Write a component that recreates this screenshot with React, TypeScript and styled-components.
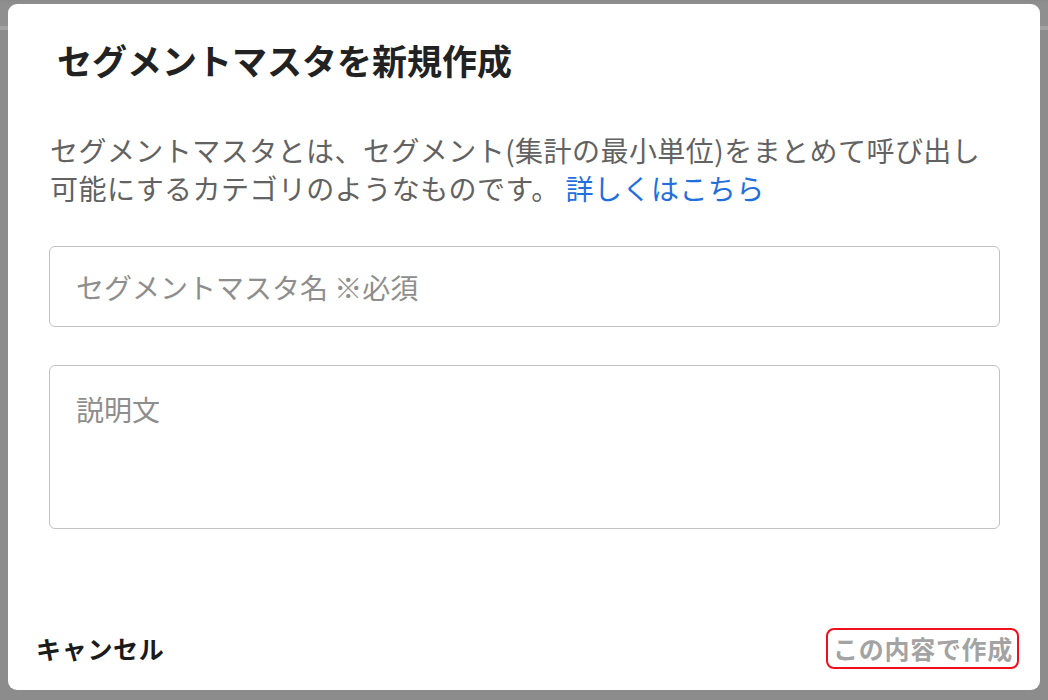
import React from "react";
import styled, { createGlobalStyle } from "styled-components";

const GlobalStyle = createGlobalStyle`
  html, body {
    margin: 0;
    padding: 0;
    overflow: hidden;
    background: #8a8a8a;
  }
  * {
    box-sizing: border-box;
  }
`;

const FONT = `"Noto Sans CJK JP", "Noto Sans", sans-serif`;

const Backdrop = styled.div`
  width: 1048px;
  height: 700px;
  padding: 4px 8px 10px 8px;
  background: linear-gradient(
    to bottom,
    #8a8a8a 0,
    #8f8f8f 4px,
    #8f8f8f 26px,
    #a2a2a2 26px,
    #a2a2a2 30px,
    #8c8c8c 30px
  );
  font-family: ${FONT};
`;

const Modal = styled.div`
  height: 100%;
  background: #fff;
  border-radius: 9px;
  display: flex;
  flex-direction: column;
`;

const Title = styled.h2`
  margin: 34px 0 0 0;
  padding: 0 40px 0 49px;
  font-size: 35px;
  line-height: 44px;
  font-weight: 700;
  color: #222;
`;

const Body = styled.div`
  padding: 49px 40px 0 42px;
  display: flex;
  flex-direction: column;
`;

const Description = styled.p`
  margin: 0;
  font-size: 28px;
  line-height: 38px;
  letter-spacing: 0.45px;
  color: #626262;
  white-space: nowrap;
`;

const Link = styled.a`
  color: #1f6fde;
  text-decoration: none;
  margin-left: 6px;
  cursor: pointer;
`;

const fieldBase = `
  width: 100%;
  border: 1px solid #c2c2c2;
  border-radius: 6px;
  font-family: ${FONT};
  font-size: 28px;
  color: #333;
  background: #fff;
  outline: none;
  &::placeholder {
    color: #8e8e8e;
  }
`;

const NameInput = styled.input`
  ${fieldBase}
  margin-top: 39px;
  margin-left: -1px;
  width: calc(100% + 1px);
  height: 81px;
  padding: 0 26px;
`;

const DescArea = styled.textarea`
  ${fieldBase}
  margin-top: 38px;
  margin-left: -1px;
  width: calc(100% + 1px);
  height: 164px;
  padding: 24px 26px;
  line-height: 38px;
  resize: none;
`;

const Footer = styled.div`
  margin-top: auto;
  padding: 0 21px 21px 21px;
  display: flex;
  justify-content: space-between;
  align-items: center;
`;

const TextButton = styled.button<{ $disabled?: boolean; $focused?: boolean }>`
  font-family: ${FONT};
  font-size: 25px;
  line-height: 37px;
  letter-spacing: 0.7px;
  font-weight: 700;
  background: none;
  border: 2px solid ${(p) => (p.$focused ? "#f0101c" : "transparent")};
  border-radius: 8px;
  padding: 0 4px 0 5px;
  color: ${(p) => (p.$disabled ? "#a3a3a3" : "#1b1b1b")};
  cursor: ${(p) => (p.$disabled ? "default" : "pointer")};
`;

export default function App() {
  return (
    <>
      <GlobalStyle />
      <Backdrop>
        <Modal>
          <Title>セグメントマスタを新規作成</Title>
          <Body>
            <Description>
              セグメントマスタとは、セグメント(集計の最小単位)をまとめて呼び出し
              <br />
              可能にするカテゴリのようなものです。
              <Link>詳しくはこちら</Link>
            </Description>
            <NameInput placeholder="セグメントマスタ名 ※必須" />
            <DescArea placeholder="説明文" />
          </Body>
          <Footer>
            <TextButton>キャンセル</TextButton>
            <TextButton $disabled $focused>
              この内容で作成
            </TextButton>
          </Footer>
        </Modal>
      </Backdrop>
    </>
  );
}
